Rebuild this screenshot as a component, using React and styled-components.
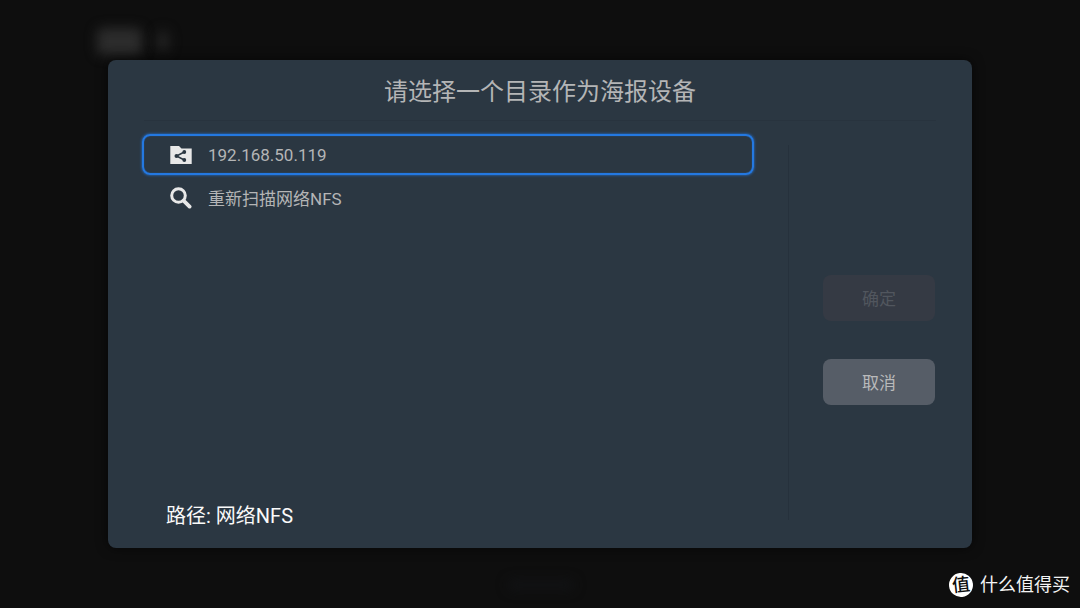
import styled, { createGlobalStyle } from "styled-components";

const GlobalStyle = createGlobalStyle`
  * {
    box-sizing: border-box;
  }

  body {
    margin: 0;
    background: #0e0e0e;
    font-family: Roboto, "Noto Sans CJK SC", sans-serif;
  }

  button {
    font-family: inherit;
  }
`;

const Screen = styled.div`
  position: relative;
  display: flex;
  justify-content: center;
  align-items: center;
  min-height: 100vh;
  padding: 60px 10%;
  overflow: hidden;
`;

const Ghost = styled.div`
  position: absolute;
  left: ${props => props.$left};
  top: ${props => props.$top};
  width: ${props => props.$width};
  height: ${props => props.$height};
  background: ${props => props.$color};
  border-radius: 6px;
  filter: blur(6px);
`;

const Dialog = styled.section`
  position: relative;
  display: flex;
  flex-direction: column;
  width: 100%;
  min-height: calc(100vh - 120px);
  background: #2b3742;
  border-radius: 8px;
  box-shadow: 0 0 12px rgba(0, 0, 0, 0.6);
`;

const Header = styled.header`
  margin: 0 36px;
  padding-top: 4px;
  border-bottom: 1px solid #28333e;
`;

const Title = styled.h1`
  margin: 0;
  color: #b4b5b6;
  font-size: 24px;
  font-weight: 400;
  line-height: 56px;
  text-align: center;
`;

const Body = styled.div`
  display: flex;
  flex: 1;
`;

const Main = styled.div`
  display: flex;
  flex: 1;
  flex-direction: column;
  justify-content: space-between;
  padding: 13px 34px 18px;
`;

const List = styled.ul`
  display: flex;
  flex-direction: column;
  gap: 2px;
  margin: 0;
  padding: 0;
  list-style: none;
`;

const Row = styled.button`
  display: flex;
  align-items: center;
  gap: 16px;
  width: 100%;
  height: 41px;
  padding: 0 26px;
  color: #b4b5b6;
  background: transparent;
  border: 2px solid ${props => (props.$focused ? "#2478e0" : "transparent")};
  border-radius: 8px;
  box-shadow: ${props =>
    props.$focused ? "0 0 3px #2478e0, inset 0 0 1px #2478e0" : "none"};
  font-size: 17px;
  text-align: left;
  outline: none;
`;

const Icon = styled.svg`
  width: 22px;
  height: 22px;
  flex: none;
`;

const Path = styled.p`
  margin: 0;
  padding: 0 24px;
  color: #fafafa;
  font-size: 20px;
  line-height: 28px;
`;

const Actions = styled.div`
  display: flex;
  flex-direction: column;
  justify-content: center;
  gap: 38px;
  width: 184px;
  margin: 24px 0 28px;
  padding: 14px 37px 0 34px;
  border-left: 1px solid #26313c;
`;

const ActionButton = styled.button`
  height: 46px;
  padding: 0;
  color: #b9babb;
  background: #565d67;
  border: 0;
  border-radius: 8px;
  font-size: 17px;

  &:disabled {
    color: #51565e;
    background: #353a44;
  }
`;

const Watermark = styled.div`
  position: absolute;
  right: 10px;
  bottom: 10px;
  display: flex;
  align-items: center;
  gap: 7px;
  color: #f4f4f4;
  font-size: 18px;
  line-height: 26px;
`;

const Badge = styled.span`
  width: 24px;
  height: 24px;
  color: #0e0e0e;
  background: #ffffff;
  border-radius: 50%;
  font-size: 18px;
  font-weight: 500;
  line-height: 23px;
  text-align: center;
  transform: rotate(-6deg);
`;

const SharedFolderIcon = () => (
  <Icon viewBox="0 0 22 22" aria-hidden="true">
    <path d="M0.3 2H9L11.5 4.500H21.700V20H0.300Z" fill="#e8e8e8" />
    <path
      d="M14.300 8L6.500 12L14.300 16"
      fill="none"
      stroke="#2b3742"
      strokeWidth="1.500"
    />
    <circle cx="14.300" cy="8" r="1.900" fill="#2b3742" />
    <circle cx="6.500" cy="12" r="2" fill="#2b3742" />
    <circle cx="14.300" cy="16" r="1.900" fill="#2b3742" />
  </Icon>
);

const SearchIcon = () => (
  <Icon viewBox="0 0 22 22" aria-hidden="true">
    <circle
      cx="8.500"
      cy="8.500"
      r="6.800"
      fill="none"
      stroke="#e8e8e8"
      strokeWidth="3"
    />
    <path
      d="M13.800 13.800L19.600 19.600"
      stroke="#e8e8e8"
      strokeWidth="3.800"
      strokeLinecap="round"
    />
  </Icon>
);

const entries = [
  { label: "192.168.50.119", icon: SharedFolderIcon, focused: true },
  { label: "重新扫描网络NFS", icon: SearchIcon, focused: false }
];

const App = () => (
  <>
    <GlobalStyle />
    <Screen>
      <Ghost $left="9%" $top="28px" $width="45px" $height="27px" $color="#2c2c2c" />
      <Ghost $left="14.5%" $top="30px" $width="12px" $height="22px" $color="#222222" />
      <Ghost $left="47%" $top="580px" $width="66px" $height="10px" $color="#121315" />
      <Dialog role="dialog" aria-labelledby="dialog-title">
        <Header>
          <Title id="dialog-title">请选择一个目录作为海报设备</Title>
        </Header>
        <Body>
          <Main>
            <List>
              {entries.map(({ label, icon: EntryIcon, focused }) => (
                <li key={label}>
                  <Row type="button" $focused={focused}>
                    <EntryIcon />
                    {label}
                  </Row>
                </li>
              ))}
            </List>
            <Path>路径: 网络NFS</Path>
          </Main>
          <Actions>
            <ActionButton type="button" disabled>
              确定
            </ActionButton>
            <ActionButton type="button">取消</ActionButton>
          </Actions>
        </Body>
      </Dialog>
      <Watermark>
        <Badge>值</Badge>
        什么值得买
      </Watermark>
    </Screen>
  </>
);

export default App;
